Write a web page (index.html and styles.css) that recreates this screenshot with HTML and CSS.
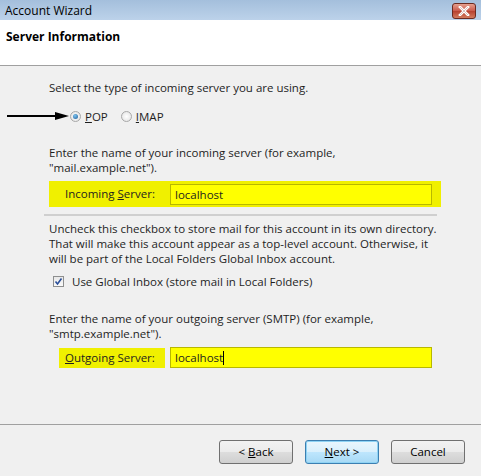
FILE: index.html
```html
<!DOCTYPE html>
<html lang="en">
<head>
<meta charset="UTF-8" />
<title>Account Wizard</title>
<link rel="stylesheet" href="styles.css">
</head>
<body>
  <div class="window">
    <div class="titlebar">
      <span class="title">Account Wizard</span>
      <span class="close">
        <svg width="14" height="10" viewBox="0 0 14 10">
          <path d="M3 1 L11 9 M11 1 L3 9" stroke="#fff" stroke-width="2.6" stroke-linecap="square"/>
          <path d="M3 1 L11 9 M11 1 L3 9" stroke="#8a3a2a" stroke-width="0.6" fill="none" opacity="0.5"/>
        </svg>
      </span>
    </div>

    <div class="header">Server Information</div>

    <div class="content">
      <p class="text">Select the type of incoming server you are using.</p>

      <div class="radio-row">
        <svg class="arrow" width="62" height="10" viewBox="0 0 62 10">
          <line x1="0" y1="5" x2="50" y2="5" stroke="#000" stroke-width="2"/>
          <path d="M48 1 L62 5 L48 9 Z" fill="#000"/>
        </svg>
        <label class="radio"><span class="dot checked"></span><u>P</u>OP</label>
        <label class="radio"><span class="dot"></span><u>I</u>MAP</label>
      </div>

      <p class="text two">Enter the name of your incoming server (for example,<br>"mail.example.net").</p>

      <div class="field hl-all">
        <span class="field-label">Incoming <u>S</u>erver:</span>
        <span class="input">localhost</span>
      </div>

      <div class="sep"></div>

      <p class="text three">Uncheck this checkbox to store mail for this account in its own directory.<br>That will make this account appear as a top-level account. Otherwise, it<br>will be part of the Local Folders Global Inbox account.</p>

      <label class="check">
        <span class="box">
          <svg width="9" height="9" viewBox="0 0 9 9"><path d="M1.5 4.5 L3.5 7 L7.5 1.5" stroke="#2a4f9a" stroke-width="1.6" fill="none"/></svg>
        </span>
        Use Global Inbox (store mail in Local Folders)
      </label>

      <p class="text two out">Enter the name of your outgoing server (SMTP) (for example,<br>"smtp.example.net").</p>

      <div class="field small">
        <span class="field-label hl"><u>O</u>utgoing Server:</span>
        <span class="input">localhost<span class="caret"></span></span>
      </div>
    </div>

    <div class="footer">
      <button class="btn"><span>&lt; <u>B</u>ack</span></button>
      <button class="btn focus"><span><u>N</u>ext &gt;</span></button>
      <button class="btn">Cancel</button>
    </div>
  </div>
</body>
</html>
```

FILE: styles.css
```css
body {
  margin: 0;
  font-family: "Open Sans", "Noto Sans", sans-serif;
  font-size: 11.5px;
  color: #1e1e1e;
}

.window {
  width: 481px;
  height: 476px;
  background: #f0f0f0;
  display: flex;
  flex-direction: column;
}

.titlebar {
  height: 20px;
  background: linear-gradient(#a4bfdc, #bcd2ea);
  display: flex;
  align-items: center;
  justify-content: space-between;
  padding: 0 5px;
}

.title {
  font-size: 12px;
  color: #000;
}

.close {
  width: 22px;
  height: 14px;
  margin-top: 1px;
  border: 1px solid #6b2a20;
  border-radius: 3px;
  background: linear-gradient(#e6a08f, #c9584a 50%, #b6402f 51%, #d27a5e);
  display: flex;
  align-items: center;
  justify-content: center;
}

.header {
  height: 46px;
  background: #fff;
  border-bottom: 1px solid #a0a0a0;
  font-weight: bold;
  font-size: 12px;
  color: #000;
  padding: 8px 6px 0;
  box-sizing: border-box;
}

.content {
  flex: 1;
  padding: 14px 40px 0 49px;
}

.text {
  margin: 0;
  line-height: 15px;
}

.radio-row {
  display: flex;
  align-items: center;
  margin: 13px 0 0 -42px;
  height: 16px;
}

.arrow {
  margin-right: 1px;
}

.radio {
  display: flex;
  align-items: center;
  margin-right: 13px;
}

.dot {
  width: 11px;
  height: 11px;
  border-radius: 50%;
  border: 1px solid #a8a8a8;
  background: radial-gradient(#fff, #e0e0e0);
  box-sizing: border-box;
  margin-right: 4px;
  display: flex;
  align-items: center;
  justify-content: center;
}

.dot.checked::after {
  content: "";
  width: 5px;
  height: 5px;
  border-radius: 50%;
  background: radial-gradient(circle at 40% 35%, #7dc4ee, #1b5a9a);
}

.two {
  margin-top: 21px;
}

.field {
  display: flex;
  align-items: center;
  height: 26px;
  margin-top: 6px;
  width: 392px;
}

.field.small {
  height: 21px;
  margin-top: 6px;
}

.hl-all {
  background: #f0f000;
}

.field-label {
  width: 105px;
  padding-left: 16px;
  box-sizing: border-box;
  line-height: 20px;
  flex-shrink: 0;
  white-space: nowrap;
}

.field-label.hl {
  background: #f0f000;
  margin-left: 10px;
  padding-left: 6px;
  width: 106px;
  margin-right: 5px;
}

.input {
  width: 262px;
  height: 21px;
  margin-left: 16px;
  border: 1px solid #b8b800;
  background: #ffff00;
  box-sizing: border-box;
  padding-left: 4px;
  line-height: 19px;
  display: flex;
  align-items: center;
}

.field-label.hl + .input {
  margin-left: 0;
}

.caret {
  width: 1px;
  height: 14px;
  background: #000;
}

.sep {
  width: 393px;
  height: 2px;
  background: #cfcfcf;
  margin: 7px 0 0 -5px;
}

.three {
  margin-top: 5px;
}

.check {
  display: flex;
  align-items: center;
  margin: 8px 0 0 4px;
}

.box {
  width: 11px;
  height: 11px;
  border: 1px solid #8e8f8f;
  background: linear-gradient(#e8e8e8, #fafafa);
  box-sizing: border-box;
  margin-right: 8px;
  display: flex;
  align-items: center;
  justify-content: center;
}

.out {
  margin-top: 22px;
}

.footer {
  height: 52px;
  border-top: 1px solid #a0a0a0;
  display: flex;
  justify-content: flex-end;
  align-items: center;
  gap: 12px;
  padding: 2px 16px 0 0;
  box-sizing: border-box;
}

.btn {
  width: 74px;
  height: 24px;
  border: 1px solid #707070;
  border-radius: 3px;
  background: linear-gradient(#f2f2f2, #ebebeb 50%, #dddddd 51%, #cfcfcf);
  font-family: inherit;
  font-size: 11.5px;
  color: #000;
  padding: 0;
}

.btn.focus {
  border-color: #3c7fb1;
  box-shadow: inset 0 0 0 1px #8fd3f4;
  background: linear-gradient(#eaf6fd, #d9f0fc 50%, #bee6fd 51%, #a7d9f5);
}
```
